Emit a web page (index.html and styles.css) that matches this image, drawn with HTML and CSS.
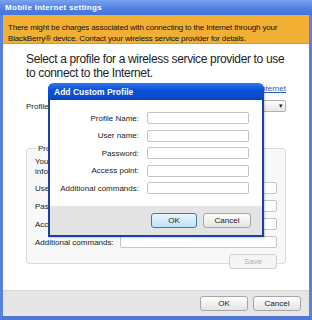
FILE: index.html
```html
<!DOCTYPE html>
<html lang="en">
<head>
  <meta charset="UTF-8">
  <title>Mobile Internet settings</title>
  <link rel="stylesheet" href="styles.css">
</head>
<body>
  <div class="window">
    <div class="titlebar">Mobile Internet settings</div>
    <div class="banner">
      There might be charges associated with connecting to the Internet through your
      BlackBerry&reg; device. Contact your wireless service provider for details.
    </div>
    <div class="content">
      <h1 class="heading">Select a profile for a wireless service provider to use to connect to the Internet.</h1>
      <div class="link-row"><a href="#">Learn more about connecting to the Internet</a></div>
      <div class="profile-row">
        <span>Profile:</span>
        <div class="select">Custom<span class="arrow">&#9662;</span></div>
      </div>
      <fieldset class="group">
        <legend>Profile details</legend>
        <p class="note">Your wireless service provider's profile contains the following<br>information.</p>
        <div class="field"><label>User name:</label><input type="text"></div>
        <div class="field"><label>Password:</label><input type="text"></div>
        <div class="field"><label>Access point:</label><input type="text"></div>
        <div class="field"><label>Additional commands:</label><input type="text"></div>
        <div class="save-row"><button class="btn" disabled>Save</button></div>
      </fieldset>
    </div>
    <div class="footer">
      <button class="btn">OK</button>
      <button class="btn">Cancel</button>
    </div>

    <div class="dialog">
      <div class="dialog-title">Add Custom Profile</div>
      <div class="dialog-body">
        <div class="dfield"><label>Profile Name:</label><input type="text"></div>
        <div class="dfield"><label>User name:</label><input type="text"></div>
        <div class="dfield"><label>Password:</label><input type="text"></div>
        <div class="dfield"><label>Access point:</label><input type="text"></div>
        <div class="dfield"><label>Additional commands:</label><input type="text"></div>
      </div>
      <div class="dialog-footer">
        <button class="btn btn-default">OK</button>
        <button class="btn">Cancel</button>
      </div>
    </div>
  </div>
</body>
</html>
```

FILE: styles.css
```css
body {
  margin: 0;
  padding: 0;
  font-family: "Liberation Sans", Arial, sans-serif;
  background-color: #fff;
}

.window {
  position: relative;
  width: 312px;
  height: 320px;
  box-sizing: border-box;
  display: flex;
  flex-direction: column;
  border-left: 3px solid #5b82da;
  border-right: 3px solid #5b82da;
  border-bottom: 4px solid #5177d4;
  background-color: #fff;
}

.titlebar {
  height: 15px;
  flex-shrink: 0;
  margin: 0 -3px;
  padding-left: 5px;
  background: linear-gradient(#7aa3ee, #4d7ee0 60%, #4673da);
  color: #fff;
  font-weight: bold;
  font-size: 8px;
  line-height: 16px;
  letter-spacing: 0.3px;
}

.banner {
  height: 29px;
  flex-shrink: 0;
  box-sizing: border-box;
  padding: 7px 6px 0 5px;
  background-color: #f1b034;
  border-bottom: 1px solid #d89a2a;
  font-size: 8px;
  line-height: 11px;
  letter-spacing: -0.15px;
  color: #111;
}

.content {
  flex: 1;
  min-height: 0;
  overflow: hidden;
  padding: 8px 23px 0 23px;
  background-color: #fff;
}

.heading {
  margin: 0;
  font-size: 12px;
  font-weight: normal;
  line-height: 14px;
  letter-spacing: -0.35px;
  color: #222;
}

.link-row {
  margin-top: 4px;
  text-align: right;
  font-size: 8px;
  line-height: 10px;
}

.link-row a {
  color: #1b5fb8;
}

.profile-row {
  display: flex;
  align-items: center;
  justify-content: space-between;
  margin-top: 6px;
  font-size: 8px;
  color: #222;
}

.select {
  position: relative;
  width: 210px;
  height: 12px;
  box-sizing: border-box;
  border: 1px solid #b0b0b0;
  border-radius: 2px;
  background: linear-gradient(#fdfdfd, #e8e8e8);
  font-size: 8px;
  line-height: 10px;
  padding-left: 4px;
}

.arrow {
  position: absolute;
  right: 2px;
  top: 0;
  font-size: 7px;
  color: #222;
}

.group {
  margin: 32px 1px 0 0;
  padding: 4px 8px 7px 8px;
  height: 120px;
  box-sizing: border-box;
  border: 1px solid #dcdcdc;
  border-radius: 4px;
  background-color: #f8f8f8;
  font-size: 8px;
  color: #222;
}

.group legend {
  padding: 0 2px;
  margin-left: 1px;
}

.note {
  margin: 0 0 5px 0;
  line-height: 10px;
}

.field {
  display: flex;
  align-items: center;
  margin-bottom: 6px;
}

.field label {
  width: 85px;
}

.field input, .dfield input {
  width: 157px;
  height: 12px;
  box-sizing: border-box;
  border: 1px solid #c4c4c4;
  border-radius: 2px;
  background-color: #fff;
  padding: 0;
  margin: 0;
}

.save-row {
  display: flex;
  justify-content: flex-end;
  margin-top: 1px;
}

.btn {
  width: 48px;
  height: 15px;
  padding: 0;
  border: 1px solid #a6a6a6;
  border-radius: 3px;
  background: linear-gradient(#fdfdfd, #e4e4e4);
  font-family: "Liberation Sans", Arial, sans-serif;
  font-size: 8px;
  color: #222;
}

.btn:disabled {
  color: #b0b0b0;
  border-color: #d2d2d2;
  background: #f4f4f4;
}

.footer {
  height: 26px;
  flex-shrink: 0;
  box-sizing: border-box;
  display: flex;
  justify-content: flex-end;
  gap: 5px;
  padding: 5px 8px 0 0;
  background-color: #e6e6e6;
  border-top: 1px solid #d8d8d8;
}

.dialog {
  position: absolute;
  left: 45px;
  top: 83px;
  width: 216px;
  height: 154px;
  box-sizing: border-box;
  display: flex;
  flex-direction: column;
  border: 2px solid #1c3fa6;
  border-top: none;
  border-radius: 6px 6px 0 0;
  background-color: #fff;
  box-shadow: 1px 1px 2px rgba(0, 0, 0, 0.2);
}

.dialog-title {
  height: 17px;
  margin: 0 -2px;
  padding-left: 6px;
  border-radius: 6px 6px 0 0;
  background: linear-gradient(#2f78f0, #0a52d8 40%, #0a4ccf 80%, #0843b8);
  color: #fff;
  font-weight: bold;
  font-size: 8.5px;
  line-height: 18px;
}

.dialog-body {
  flex: 1;
  padding-top: 12px;
  font-size: 8px;
  color: #222;
}

.dfield {
  display: flex;
  align-items: center;
  height: 12px;
  margin-bottom: 5.5px;
}

.dfield label {
  width: 89px;
  text-align: right;
  margin-right: 8px;
}

.dfield input {
  width: 102px;
}

.dialog-footer {
  height: 29px;
  box-sizing: border-box;
  display: flex;
  justify-content: flex-end;
  gap: 6px;
  padding: 7px 11px 0 0;
  background-color: #e4e4e4;
}

.btn-default {
  width: 46px;
  border-color: #3d7bad;
  background: linear-gradient(#eaf6fd, #bfe2f6);
}
```
